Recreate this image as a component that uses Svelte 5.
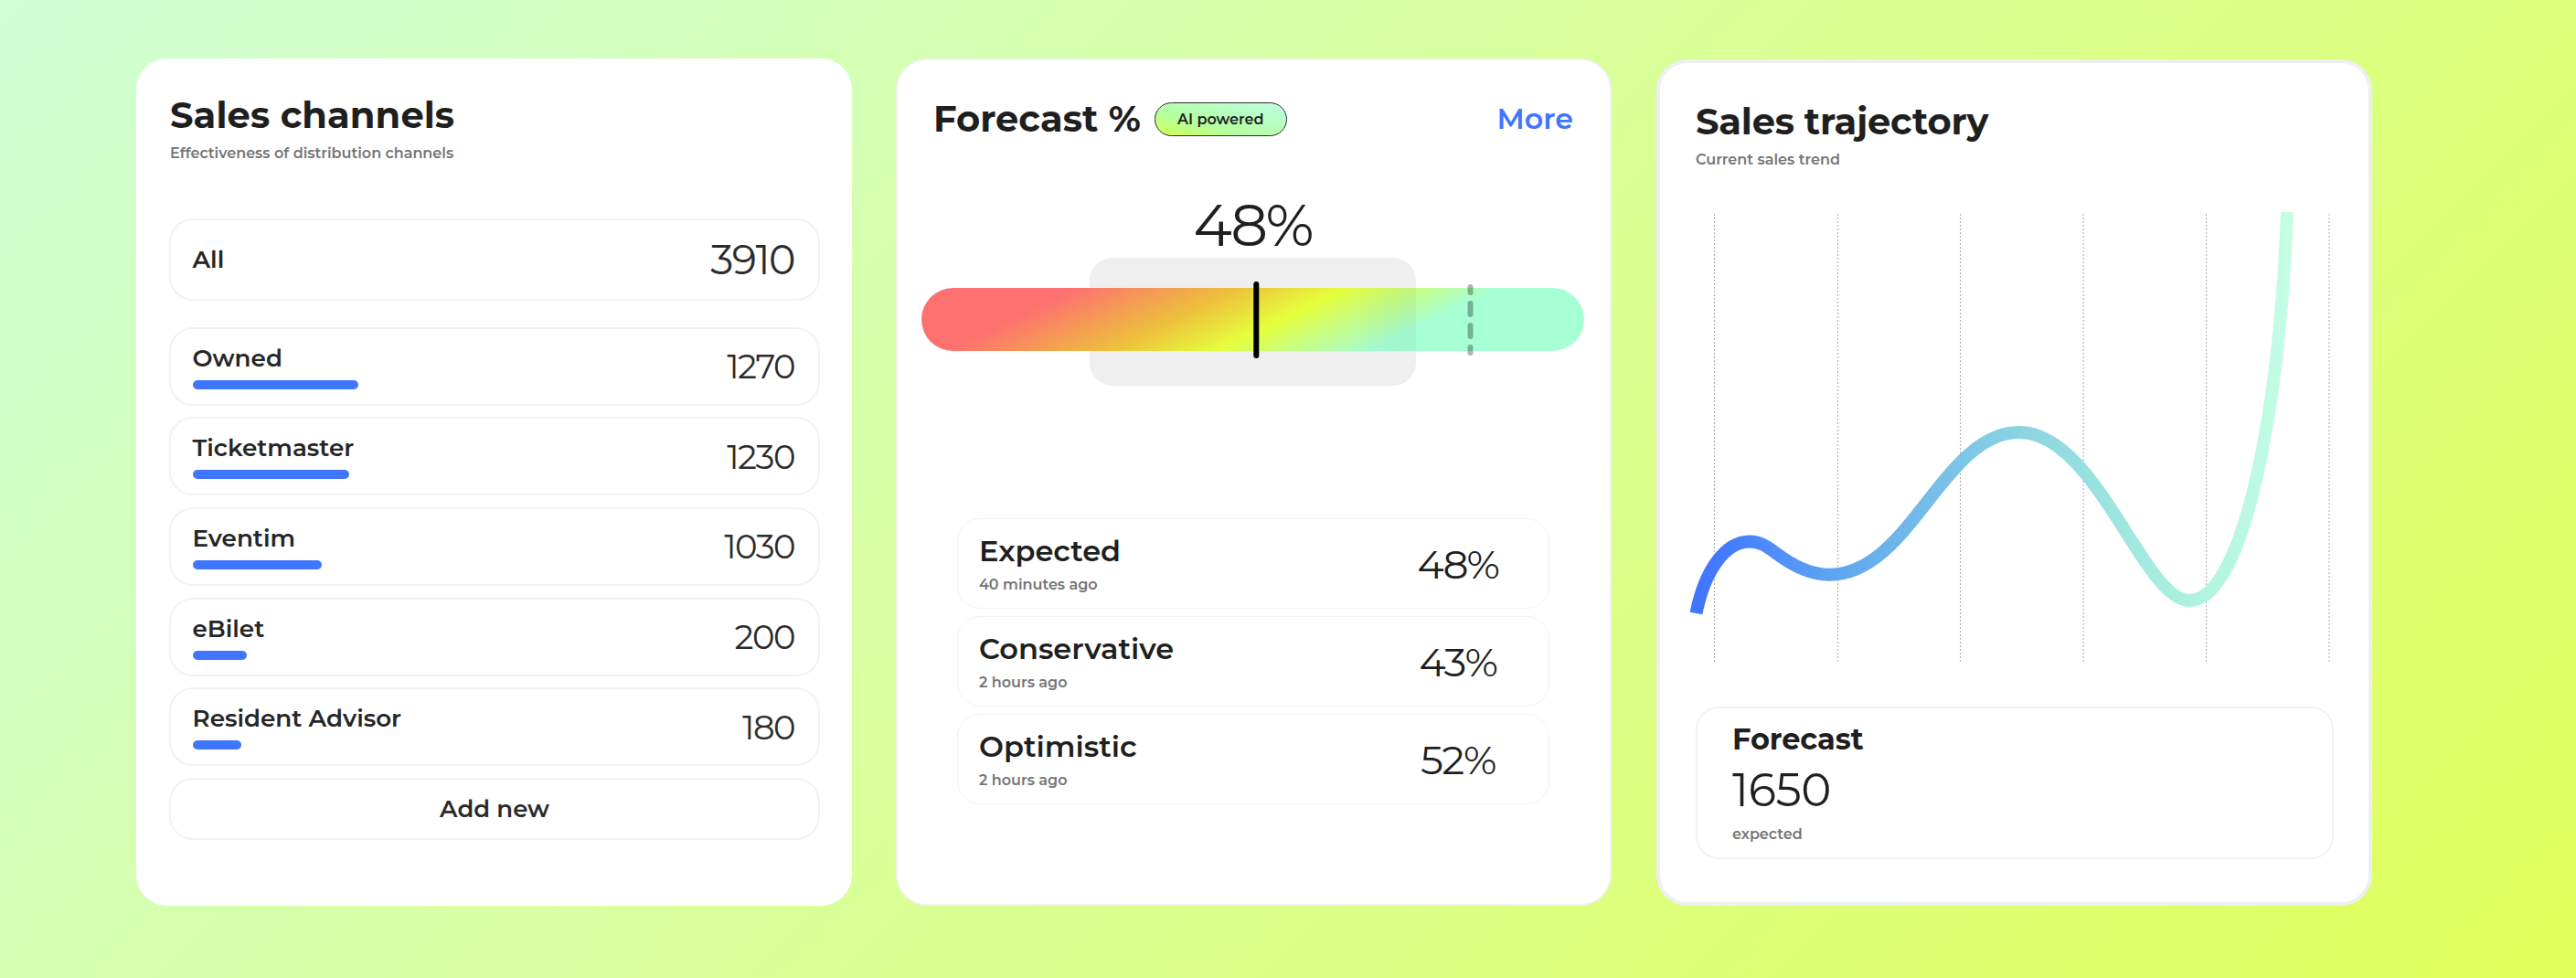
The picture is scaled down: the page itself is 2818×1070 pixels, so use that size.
<script>
  const channels = [
    { name: 'Owned', value: 1270, bar: 181 },
    { name: 'Ticketmaster', value: 1230, bar: 171 },
    { name: 'Eventim', value: 1030, bar: 141 },
    { name: 'eBilet', value: 200, bar: 59.5 },
    { name: 'Resident Advisor', value: 180, bar: 53.5 }
  ];
  const scenarios = [
    { name: 'Expected', ago: '40 minutes ago', value: '48%' },
    { name: 'Conservative', ago: '2 hours ago', value: '43%' },
    { name: 'Optimistic', ago: '2 hours ago', value: '52%' }
  ];
  // x of the dotted vertical guides, in chart units
  const guides = [30.5, 165.5, 299.5, 434, 568.5, 703];
</script>

<main>
  <section class="card channels">
    <h2>Sales channels</h2>
    <p class="sub">Effectiveness of distribution channels</p>

    <div class="row all">
      <span class="name">All</span>
      <span class="total">3910</span>
    </div>

    <div class="list">
      {#each channels as c}
        <div class="row">
          <div class="label">
            <span class="name">{c.name}</span>
            <div class="bar" style="width: {c.bar}px"></div>
          </div>
          <span class="num">{c.value}</span>
        </div>
      {/each}
      <button class="add">Add new</button>
    </div>
  </section>

  <section class="card forecast">
    <header>
      <h2>Forecast %</h2>
      <span class="pill">AI powered</span>
      <a class="more" href="#more">More</a>
    </header>

    <div class="big">48%</div>
    <div class="gauge">
      <div class="range"></div>
      <div class="track"></div>
      <div class="range tint"></div>
      <svg class="marks" width="725" height="140" viewBox="0 0 725 140">
        <line x1="366.3" y1="29" x2="366.3" y2="107" stroke="#000" stroke-width="6" stroke-linecap="round" />
        <g fill="#000" fill-opacity="0.3">
          <rect x="597.5" y="29" width="6" height="12" rx="3" />
          <rect x="597.5" y="47" width="6" height="18" rx="3" />
          <rect x="597.5" y="71" width="6" height="18" rx="3" />
          <rect x="597.5" y="95" width="6" height="12" rx="3" />
        </g>
      </svg>
    </div>

    <div class="scenarios">
      {#each scenarios as s}
        <div class="scenario">
          <div>
            <div class="title">{s.name}</div>
            <div class="ago">{s.ago}</div>
          </div>
          <span class="pct">{s.value}</span>
        </div>
      {/each}
    </div>
  </section>

  <section class="card trajectory">
    <h2>Sales trajectory</h2>
    <p class="sub">Current sales trend</p>

    <svg class="chart" width="710" height="500" viewBox="0 0 710 500">
      <defs>
        <linearGradient id="trend" gradientUnits="userSpaceOnUse" x1="10" y1="0" x2="657" y2="0">
          <stop offset="0" stop-color="#3b70ff" />
          <stop offset="0.06" stop-color="#4079ff" />
          <stop offset="0.24" stop-color="#5aa3f0" />
          <stop offset="0.55" stop-color="#88d3e0" />
          <stop offset="0.83" stop-color="#a9f1dd" />
          <stop offset="1" stop-color="#c3fde4" />
        </linearGradient>
      </defs>
      {#each guides as x}
        <line x1={x} y1="6" x2={x} y2="498" stroke="#aaa" stroke-width="1" stroke-dasharray="2 2" />
      {/each}
      <path
        d="M10.5 443 C20 395 43 364.5 69 364.5 C81 364.5 88 370 97 376.5 C112 388 134 400.7 156 400.7 C245 400.7 280 245 364 245 C448 245 500 429 550 429 C607 429 648 235 657 4"
        fill="none" stroke="url(#trend)" stroke-opacity="0.97" stroke-width="14"
      />
    </svg>

    <div class="expected">
      <h3>Forecast</h3>
      <div class="count">1650</div>
      <div class="note">expected</div>
    </div>
  </section>
</main>

<style>
  :global(body) {
    font-family: Montserrat, Inter, sans-serif;
    color: #1f1f1f;
  }
  main {
    box-sizing: border-box;
    width: 2818px;
    height: 1070px;
    padding: 64px 0 0 149px;
    display: flex;
    align-items: flex-start;
    background: linear-gradient(135deg, #d0ffd6 0%, #d9ff96 50%, #e1ff5a 100%);
  }
  .card {
    box-sizing: border-box;
    height: 927px;
    border-radius: 34px;
    background: #fff;
    display: flex;
    flex-direction: column;
  }
  h2 {
    margin: 0;
    font-size: 40px;
    line-height: 48px;
    font-weight: 700;
    white-space: nowrap;
  }
  .sub {
    margin: 0;
    font-size: 16px;
    line-height: 20px;
    font-weight: 600;
    color: #757575;
  }

  .channels {
    width: 783px;
    padding: 38px 35px 0 36px;
  }
  .channels h2, .channels .sub {
    padding-left: 1px;
  }
  .channels h2 {
    letter-spacing: 0.1px;
  }
  .channels .sub {
    margin-top: 8px;
  }
  .row {
    box-sizing: border-box;
    height: 86px;
    padding: 0 26px 0 23.5px;
    border: 2px solid #f2f2f2;
    border-radius: 26px;
    display: flex;
    align-items: center;
    justify-content: space-between;
  }
  .all {
    height: 90px;
    margin-top: 61px;
  }
  .name {
    font-size: 26.2px;
    line-height: 32px;
    font-weight: 600;
    color: #262626;
  }
  .total {
    font-size: 44.5px;
    font-weight: 400;
    letter-spacing: -1.5px;
    color: #2b2b2b;
  }
  .num {
    font-size: 37px;
    font-weight: 400;
    letter-spacing: -1.5px;
    color: #2b2b2b;
  }
  .label {
    display: flex;
    flex-direction: column;
    gap: 8px;
  }
  .bar {
    height: 10px;
    border-radius: 5px;
    background: #3f75ff;
  }
  .list {
    margin-top: 28.5px;
    display: flex;
    flex-direction: column;
    gap: 12.7px;
  }
  .add {
    height: 68px;
    border: 2px solid #f2f2f2;
    border-radius: 26px;
    background: #fff;
    font: 600 26px Montserrat, Inter, sans-serif;
    color: #2b2b2b;
  }

  .forecast {
    width: 783px;
    margin-left: 48px;
    padding: 40px 28px 0 26px;
    border: 2px solid #f0f1f2;
  }
  header {
    padding: 0 12px 0 13px;
    display: flex;
    align-items: center;
  }
  .pill {
    box-sizing: border-box;
    height: 37px;
    width: 145px;
    margin-left: 15px;
    border: 1.5px solid #2a2a2a;
    border-radius: 19px;
    background: linear-gradient(15deg, #d4ff4f 0%, #b4ff9e 35%, #b8ffcb 75%, #c0fde2 100%);
    font-size: 16px;
    line-height: 36px;
    font-weight: 600;
    text-align: center;
  }
  .more {
    margin-left: auto;
    font-size: 31.7px;
    line-height: 40px;
    font-weight: 600;
    color: #4075ff;
    text-decoration: none;
  }
  .big {
    height: 76px;
    margin-top: 54px;
    font-size: 64px;
    line-height: 76px;
    font-weight: 400;
    letter-spacing: -2px;
    text-align: center;
  }
  .gauge {
    position: relative;
    height: 140px;
    margin-top: -2px;
    display: flex;
    align-items: center;
  }
  .track {
    position: relative;
    width: 725px;
    height: 69px;
    margin-bottom: 5px;
    border-radius: 35px;
    background: linear-gradient(154deg, #ff7070 19.3%, #edc03c 40%, #e5ff3c 53.6%, #a7ffd6 73.1%);
  }
  .range {
    position: absolute;
    left: 184px;
    top: 0;
    width: 357px;
    height: 140px;
    border-radius: 25px;
    background: #efefef;
  }
  /* darkens only the part of the track under the right end of the range */
  .tint {
    top: 33px;
    height: 69px;
    border-radius: 0;
    background: linear-gradient(90deg, transparent 70%, rgba(0, 0, 0, 0.035) 96%);
  }
  .marks {
    position: absolute;
    left: 0;
    top: 0;
  }
  .scenarios {
    width: 648px;
    margin: 145px 0 0 39px;
    display: flex;
    flex-direction: column;
    gap: 8px;
  }
  .scenario {
    box-sizing: border-box;
    height: 99px;
    padding: 0 0 0 23px;
    border: 1.5px solid #f3f3f3;
    border-radius: 25px;
    display: flex;
    align-items: center;
    justify-content: space-between;
  }
  .title {
    font-size: 32px;
    line-height: 38px;
    font-weight: 600;
  }
  .ago {
    margin-top: 8px;
    font-size: 16px;
    line-height: 20px;
    font-weight: 600;
    color: #757575;
  }
  .pct {
    width: 198px;
    font-size: 44px;
    font-weight: 400;
    letter-spacing: -1.5px;
    text-align: center;
  }

  .trajectory {
    width: 783px;
    margin-left: 49px;
    margin-top: 1px;
    height: 926px;
    padding: 40px 38px 0 39px;
    border: 4px solid #eeeff0;
  }
  .trajectory h2 {
    letter-spacing: -0.2px;
  }
  .trajectory .sub {
    margin-top: 8px;
  }
  .chart {
    margin: 43px 0 0 -10px;
    overflow: visible;
  }
  .expected {
    box-sizing: border-box;
    height: 167px;
    margin-top: 45px;
    padding: 15px 38px 0;
    border: 2px solid #f2f2f2;
    border-radius: 25px;
  }
  h3 {
    margin: 0;
    font-size: 32px;
    line-height: 38px;
    font-weight: 700;
    letter-spacing: -0.1px;
  }
  .count {
    font-size: 50px;
    line-height: 60px;
    margin-top: 7px;
    font-weight: 400;
    letter-spacing: -0.5px;
  }
  .note {
    font-size: 16px;
    line-height: 20px;
    font-weight: 600;
    margin-top: 8px;
    color: #757575;
  }
</style>
